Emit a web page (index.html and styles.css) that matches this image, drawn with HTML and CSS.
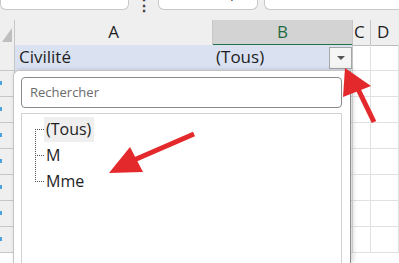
FILE: index.html
```html
<!DOCTYPE html>
<html lang="fr">
<head>
  <meta charset="UTF-8">
  <title>Filtre - Civilité</title>
  <link rel="stylesheet" href="styles.css">
</head>
<body>
  <!-- Formula bar (cut at the top) -->
  <div class="topbar">
    <div class="namebox">S64</div>
    <div class="dots">⋮</div>
    <div class="fxbox">
      <span class="fx-btn">✕</span>
      <span class="fx-btn">✓</span>
      <span class="fx-label">fx</span>
    </div>
    <div class="formula"></div>
  </div>

  <!-- Sheet grid -->
  <div class="sheet">
    <div class="row heads">
      <div class="cell corner"><span class="corner-tri"></span></div>
      <div class="cell colA">A</div>
      <div class="cell colB selected">B</div>
      <div class="cell colC">C</div>
      <div class="cell colD">D</div>
    </div>
    <div class="row r1">
      <div class="cell rh"></div>
      <div class="cell colA hl">Civilité</div>
      <div class="cell colB hl">
        <span>(Tous)</span>
        <span class="drop-btn"><span class="drop-tri"></span></span>
      </div>
      <div class="cell colC"></div>
      <div class="cell colD"></div>
    </div>
    <div class="row"><div class="cell rh"><i class="num"></i></div><div class="cell colA"></div><div class="cell colB"></div><div class="cell colC"></div><div class="cell colD"></div></div>
    <div class="row"><div class="cell rh"><i class="num"></i></div><div class="cell colA"></div><div class="cell colB"></div><div class="cell colC"></div><div class="cell colD"></div></div>
    <div class="row"><div class="cell rh"><i class="num"></i></div><div class="cell colA"></div><div class="cell colB"></div><div class="cell colC"></div><div class="cell colD"></div></div>
    <div class="row"><div class="cell rh"><i class="num"></i></div><div class="cell colA"></div><div class="cell colB"></div><div class="cell colC"></div><div class="cell colD"></div></div>
    <div class="row"><div class="cell rh"><i class="num"></i></div><div class="cell colA"></div><div class="cell colB"></div><div class="cell colC"></div><div class="cell colD"></div></div>
    <div class="row"><div class="cell rh"><i class="num"></i></div><div class="cell colA"></div><div class="cell colB"></div><div class="cell colC"></div><div class="cell colD"></div></div>
    <div class="row"><div class="cell rh"><i class="num"></i></div><div class="cell colA"></div><div class="cell colB"></div><div class="cell colC"></div><div class="cell colD"></div></div>
  </div>

  <!-- Filter dropdown panel -->
  <div class="filter-panel">
    <div class="search">Rechercher</div>
    <div class="list">
      <div class="tree-line"></div>
      <div class="item"><span class="branch"></span><span class="label active">(Tous)</span></div>
      <div class="item"><span class="branch"></span><span class="label">M</span></div>
      <div class="item"><span class="branch"></span><span class="label">Mme</span></div>
    </div>
  </div>

  <!-- Annotation arrows -->
  <svg class="arrows" width="399" height="263" viewBox="0 0 399 263">
    <line x1="358" y1="89" x2="374" y2="122" stroke="#e3292b" stroke-width="5"/>
    <polygon points="345,68 371,86 343,97" fill="#e3292b"/>
    <line x1="134" y1="160" x2="194" y2="134" stroke="#e3292b" stroke-width="5"/>
    <polygon points="109,173 130,147 143,172" fill="#e3292b"/>
  </svg>
</body>
</html>
```

FILE: styles.css
```css
body {
  margin: 0;
  width: 399px;
  height: 263px;
  overflow: hidden;
  position: relative;
  background-color: #fff;
  font-family: 'Open Sans', 'Noto Sans', sans-serif;
  color: #1e1e1e;
}

/* formula bar */
.topbar {
  display: flex;
  align-items: flex-end;
  height: 20px;
  background-color: #efefef;
  padding-bottom: 10px;
  box-sizing: border-box;
  overflow: hidden;
}

.namebox, .fxbox, .formula {
  height: 24px;
  background-color: #fff;
  border: 1px solid #c8c8c8;
  border-top: none;
  border-radius: 0 0 6px 6px;
  box-sizing: border-box;
  font-size: 15px;
  line-height: 16px;
  color: #333;
}

.namebox {
  width: 129px;
  padding-left: 8px;
}

.dots {
  width: 29px;
  text-align: center;
  font-size: 16px;
  line-height: 10px;
  color: #444;
  font-weight: bold;
}

.fxbox {
  width: 100px;
  display: flex;
  padding-left: 14px;
  gap: 12px;
  font-size: 15px;
  line-height: 14px;
  color: #b8b8b8;
}

.fx-label {
  margin-left: 8px;
  font-family: 'Liberation Serif', serif;
  font-style: italic;
  color: #444;
}

.formula {
  flex: 1;
  margin-left: 6px;
  border-right: none;
  border-radius: 0 0 0 6px;
}

/* grid */
.sheet {
  display: flex;
  flex-direction: column;
}

.row {
  display: grid;
  grid-template-columns: 15px 198px 140px 18px 1fr;
  height: 26px;
  flex-shrink: 0;
}

.cell {
  box-sizing: border-box;
  border-right: 1px solid #e1e1e1;
  border-bottom: 1px solid #e1e1e1;
  position: relative;
}

.heads {
  height: 25px;
  background-color: #efefef;
  font-size: 17px;
  line-height: 24px;
  text-align: center;
  color: #1e1e1e;
}

.heads .cell {
  border-right: 1px solid #c6c6c6;
  border-bottom: 1px solid #bdbdbd;
}

.heads .selected {
  background-color: #d3d3d3;
  border-bottom: 2px solid #217346;
  color: #1f6b3f;
}

.heads .colC {
  text-align: left;
  padding-left: 1px;
}

.heads .colD {
  text-align: left;
  padding-left: 6px;
  border-right: none;
}

.corner-tri {
  position: absolute;
  right: 2px;
  bottom: 3px;
  width: 0;
  height: 0;
  border-left: 10px solid transparent;
  border-bottom: 14px solid #bfbfbf;
}

.rh {
  background-color: #efefef;
  border-right: 1px solid #c6c6c6;
  border-bottom: 1px solid #c6c6c6;
}

.num {
  position: absolute;
  left: 0;
  top: 10px;
  width: 2px;
  height: 4px;
  background-color: #4aa3df;
}

.r1 {
  font-size: 17px;
  line-height: 24px;
}

.hl {
  background-color: #dae2f2;
  border-right-color: #dae2f2;
  padding-left: 4px;
}

.r1 .colB {
  padding-left: 3px;
  border-right: 1px solid #c6c6c6;
}

.drop-btn {
  position: absolute;
  right: 0;
  top: 2px;
  width: 23px;
  height: 22px;
  box-sizing: border-box;
  border: 1px solid #a6a6a6;
  background-color: #f5f5f5;
  display: flex;
  align-items: center;
  justify-content: center;
}

.drop-tri {
  width: 0;
  height: 0;
  border-left: 4px solid transparent;
  border-right: 4px solid transparent;
  border-top: 4px solid #555;
}

/* filter panel */
.filter-panel {
  position: absolute;
  left: 13px;
  top: 70px;
  width: 338px;
  height: 193px;
  overflow: hidden;
  box-sizing: border-box;
  background-color: #fff;
  border-left: 1px solid #c4c4c4;
  border-top: 1px solid #c4c4c4;
  border-right: 1px solid #8c8c8c;
  border-radius: 6px 0 0 0;
  box-shadow: 2px 0 5px rgba(0, 0, 0, 0.18);
  padding: 6px 8px 0 7px;
}

.search {
  height: 31px;
  box-sizing: border-box;
  border: 1px solid #8a8a8a;
  border-radius: 4px;
  padding-left: 8px;
  font-size: 13px;
  line-height: 29px;
  color: #6b6b6b;
}

.list {
  position: relative;
  margin-top: 5px;
  height: 160px;
  box-sizing: border-box;
  border: 1px solid #d2d2d2;
  border-bottom: none;
  padding: 2px 0 0 13px;
}

.tree-line {
  position: absolute;
  left: 13px;
  top: 15px;
  height: 53px;
  border-left: 1px dotted #555;
}

.item {
  display: flex;
  align-items: center;
  height: 26px;
}

.branch {
  width: 9px;
  border-top: 1px dotted #555;
}

.label {
  padding: 0 3px 0 2px;
  font-size: 16px;
  line-height: 25px;
  color: #1e1e1e;
}

.label.active {
  background-color: #efefef;
}

.arrows {
  position: absolute;
  left: 0;
  top: 0;
  pointer-events: none;
}
```
